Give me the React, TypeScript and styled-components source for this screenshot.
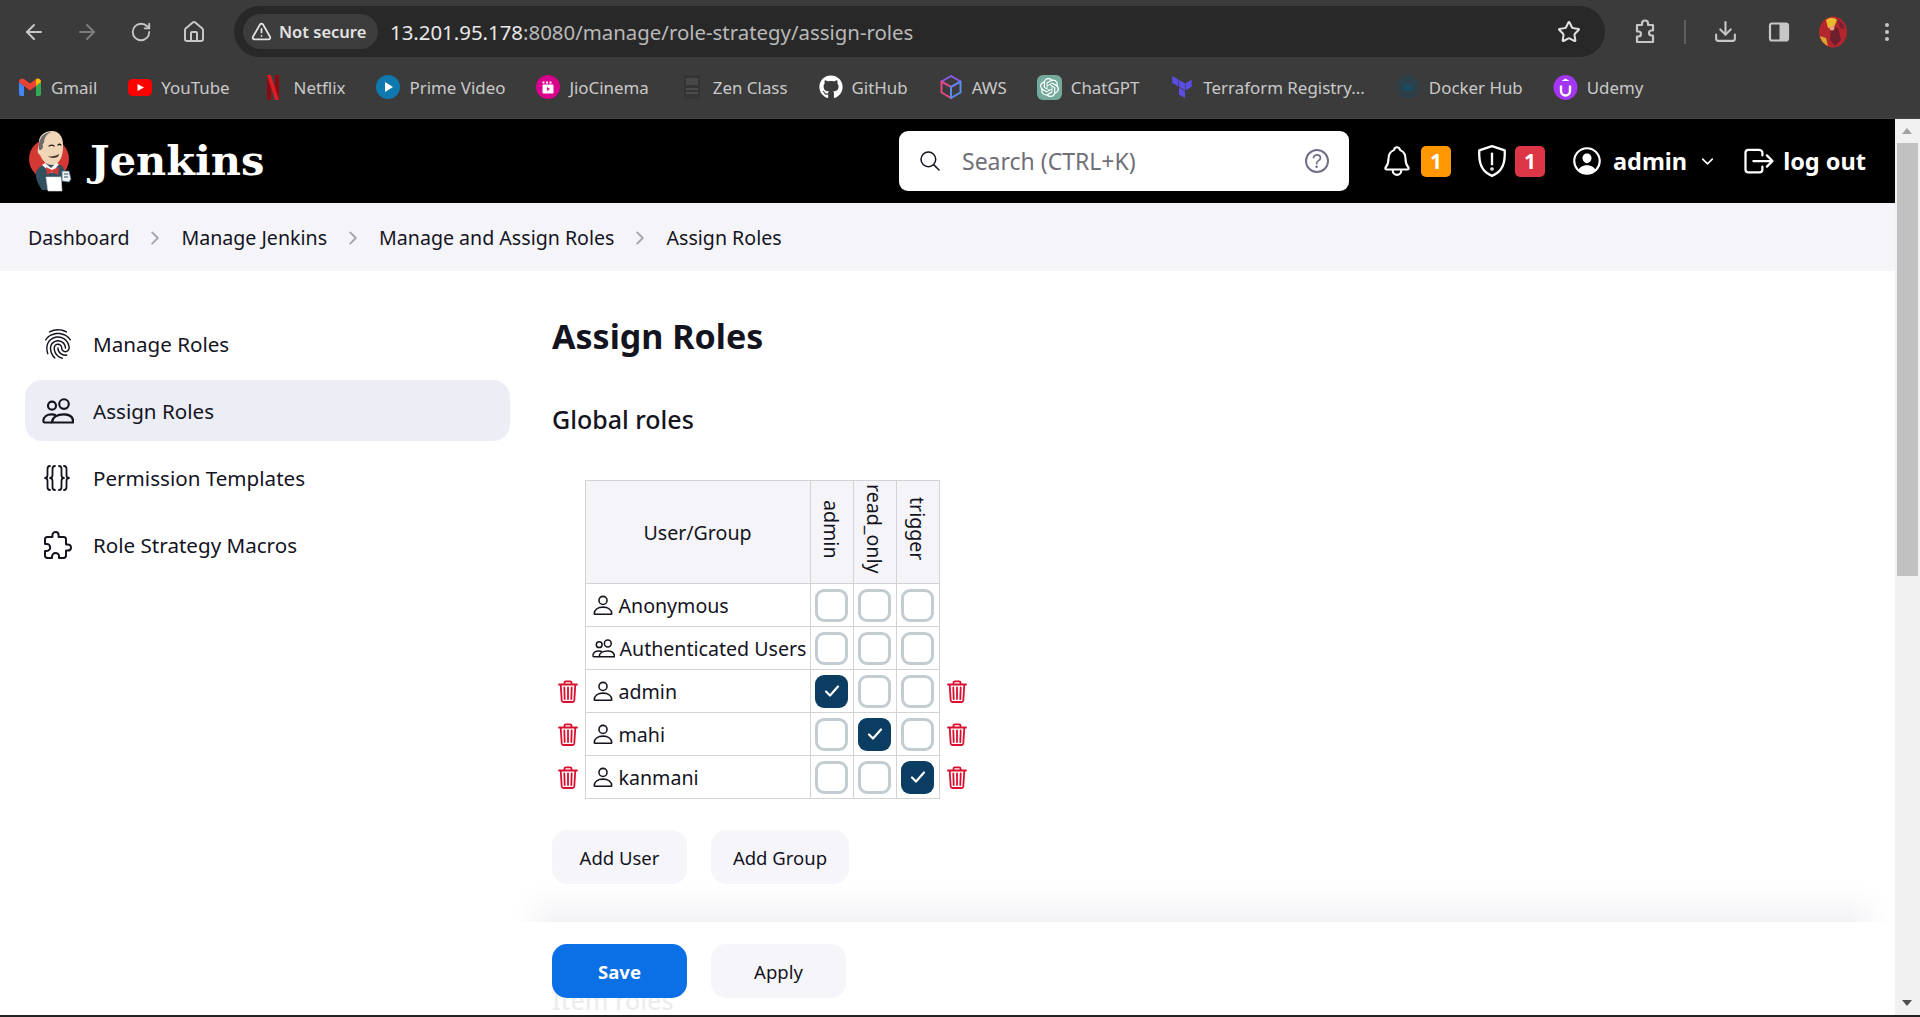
import { FC } from 'react';
import styled, { createGlobalStyle } from 'styled-components';
import {
  ArrowLeft,
  ArrowRight,
  RotateCw,
  Home,
  TriangleAlert,
  Star,
  Download,
  EllipsisVertical,
} from 'lucide-react';
import {
  IoFingerPrintOutline,
  IoExtensionPuzzleOutline,
  IoSearchOutline,
  IoHelpCircleOutline,
  IoNotificationsOutline,
  IoPersonCircleOutline,
  IoLogOutOutline,
  IoChevronDown,
  IoChevronForward,
} from 'react-icons/io5';
import { FaGithub } from 'react-icons/fa';
import { SiOpenai, SiTerraform } from 'react-icons/si';

const PersonIcon: FC<{ size?: number }> = ({ size = 22 }) => (
  <svg width={size} height={size} viewBox="0 0 24 24" fill="none" stroke="currentColor" strokeWidth="1.7" strokeLinejoin="round">
    <circle cx="12" cy="7" r="4.4" />
    <path d="M2.5 21.5c0-4.6 4.2-7.2 9.5-7.2s9.500 2.600 9.500 7.200c0 .4-.3.6-.6.6H3.100c-.3 0-.6-.2-.6-.6z" />
  </svg>
);

const PeopleIcon: FC<{ size?: number }> = ({ size = 22 }) => (
  <svg width={size} height={size} viewBox="0 0 24 24" fill="none" stroke="currentColor" strokeWidth="1.6" strokeLinejoin="round">
    <circle cx="7.500" cy="8" r="3" />
    <circle cx="16.500" cy="6.800" r="3.600" />
    <path d="M1 19.500c0-3.200 2.800-5 6.200-5 1.200 0 2.300.2 3.200.7" />
    <path d="M7.500 20.600c0-3.900 4-6.100 8.800-6.100s7.200 2.200 7.200 6.100H7.500z" />
    <path d="M1 19.500c0 .6.400 1.100 1 1.100h5.500" />
  </svg>
);

const TrashIcon: FC = () => (
  <svg width="20" height="23" viewBox="0 0 20 23" fill="none" stroke="#d9102f" strokeWidth="1.800" strokeLinecap="round" strokeLinejoin="round">
    <path d="M1 4.500h18" />
    <path d="M6.500 4.200V2.600c0-.8.600-1.300 1.300-1.300h4.400c.7 0 1.300.5 1.300 1.300v1.600" />
    <path d="M2.700 4.800l1 15.600c.1 1 .800 1.600 1.700 1.600h9.200c.9 0 1.600-.6 1.700-1.600l1-15.600" />
    <path d="M6.300 7.500l.4 11.500M10 7.500V19M13.700 7.500l-.4 11.500" />
  </svg>
);

const BracesIcon: FC = () => (
  <svg width="30" height="30" viewBox="0 0 30 30" fill="none" stroke="currentColor" strokeWidth="1.800" strokeLinecap="round" strokeLinejoin="round">
    <path d="M8 3C6 3 5.500 4 5.500 6v6c0 2-1 3-2.500 3 1.500 0 2.500 1 2.500 3v6c0 2 .5 3 2.500 3" />
    <path d="M13 3c-2 0-2.500 1-2.500 3v6c0 2-1 3-2.500 3 1.500 0 2.500 1 2.500 3v6c0 2 .5 3 2.500 3" />
    <path d="M17 3c2 0 2.500 1 2.500 3v6c0 2 1 3 2.500 3-1.500 0-2.500 1-2.500 3v6c0 2-.5 3-2.500 3" />
    <path d="M22 3c2 0 2.500 1 2.500 3v6c0 2 1 3 2.500 3-1.500 0-2.500 1-2.500 3v6c0 2-.5 3-2.500 3" />
  </svg>
);

const ShieldIcon: FC = () => (
  <svg width="32" height="34" viewBox="0 0 30 32" fill="none" stroke="#fff" strokeWidth="2.200" strokeLinecap="round" strokeLinejoin="round">
    <path d="M15 2l12 4c.5 12-2 20-12 24C5 26 2.500 18 3 6l12-4z" />
    <path d="M15 9v10" />
    <circle cx="15" cy="23.500" r=".6" fill="#fff" />
  </svg>
);

const ChromePuzzle: FC = () => (
  <svg width="26" height="26" viewBox="0 0 26 26" fill="none" stroke="#c7c7c7" strokeWidth="2.200" strokeLinejoin="round">
    <path d="M5 6h5V4.500a3 3 0 0 1 6 0V6h5v5.500h-1.500a2.500 2.500 0 0 0 0 5H21V23H5v-5.500h1.500a2.500 2.500 0 0 0 0-5H5V6z" />
  </svg>
);

const SidePanel: FC = () => (
  <svg width="24" height="24" viewBox="0 0 24 24" fill="none">
    <rect x="3" y="3.500" width="18" height="17" rx="2" stroke="#c7c7c7" strokeWidth="2.200" />
    <rect x="12.500" y="3.500" width="8.500" height="17" fill="#c7c7c7" />
  </svg>
);

const Avatar: FC = () => (
  <svg width="32" height="32" viewBox="0 0 32 32">
    <ellipse cx="16" cy="16" rx="14" ry="15.500" fill="#b3262e" />
    <path d="M9 4c4-3 8-3 11 0l-3 7-6 1z" fill="#e8b92c" />
    <path d="M3 20l6 2 2 8c-4-2-7-5-8-10z" fill="#d9a52a" />
    <path d="M14 10l7 2 3 12-6 6-5-6z" fill="#6d1f2c" />
    <path d="M20 3c4 2 7 6 8 10l-5-1z" fill="#7b2030" />
    <circle cx="15" cy="12" r="2.500" fill="#e9a07a" />
  </svg>
);

const GmailIcon: FC = () => (
  <svg width="22" height="18" viewBox="0 0 22 18">
    <path d="M0 4v12c0 1 .7 2 2 2h3V8z" fill="#4285f4" />
    <path d="M22 4v12c0 1-.7 2-2 2h-3V8z" fill="#34a853" />
    <path d="M0 4c0-3 3-4.500 5-3l6 4.500L17 1c2-1.500 5 0 5 3l-5 4-6 4.500L5 8z" fill="#ea4335" />
    <path d="M17 1c2-1.500 5 0 5 3l-5 4z" fill="#fbbc04" />
  </svg>
);

const YoutubeIcon: FC = () => (
  <svg width="24" height="17" viewBox="0 0 24 17">
    <rect width="24" height="17" rx="4.500" fill="#f00" />
    <path d="M9.500 5l6.500 3.500-6.500 3.500z" fill="#fff" />
  </svg>
);

const NetflixIcon: FC = () => (
  <svg width="12" height="25" viewBox="0 0 12 25">
    <path d="M0 0h4v25l-4 .0z" fill="#8f0a10" />
    <path d="M8 0h4v25H8z" fill="#8f0a10" />
    <path d="M0 0h4l8 25H8z" fill="#d81f26" />
  </svg>
);

const PrimeIcon: FC = () => (
  <svg width="24" height="24" viewBox="0 0 24 24">
    <circle cx="12" cy="12" r="12" fill="#0f79af" />
    <path d="M9 7l8 5-8 5z" fill="#fff" />
  </svg>
);

const JioIcon: FC = () => (
  <svg width="24" height="24" viewBox="0 0 24 24">
    <circle cx="12" cy="12" r="12" fill="#d9008d" />
    <rect x="6.500" y="9.500" width="11" height="9" rx="1" fill="#fff" />
    <path d="M6.500 6.500h2v2h-2zM10 6.500h2v2h-2zM13.500 6.500h2v2h-2z" fill="#fff" />
    <path d="M11 12l3 2-3 2z" fill="#d9008d" />
  </svg>
);

const ZenIcon: FC = () => (
  <svg width="16" height="24" viewBox="0 0 16 24">
    <rect width="16" height="24" fill="#353535" />
    <rect x="2" y="3" width="12" height="7" fill="#484848" />
    <rect x="2" y="13" width="12" height="2" fill="#4c4c4c" />
    <rect x="2" y="17" width="12" height="2" fill="#4c4c4c" />
  </svg>
);

const AwsIcon: FC = () => (
  <svg width="24" height="26" viewBox="0 0 24 26" fill="none" strokeWidth="2" strokeLinejoin="round">
    <path d="M12 2l9.500 5.500L12 13 2.500 7.500z" stroke="#8c5cf0" />
    <path d="M2.500 7.500v11L12 24V13z" stroke="#e8477f" />
    <path d="M21.500 7.500v11L12 24V13z" stroke="#5a8df0" />
  </svg>
);

const GptIcon: FC = () => (
  <GptTile>
    <SiOpenai size={19} color="#fff" />
  </GptTile>
);

const DockerIcon: FC = () => (
  <svg width="24" height="24" viewBox="0 0 24 24">
    <circle cx="12" cy="12" r="12" fill="#2f3f48" />
    <path d="M6 11h12c0 4-3 5.500-6 5.500S6 15 6 11z" fill="#1d4a63" />
    <path d="M8 8h7v2.500H8z" fill="#1d4a63" />
  </svg>
);

const UdemyIcon: FC = () => (
  <svg width="25" height="25" viewBox="0 0 25 25">
    <ellipse cx="12.500" cy="12.500" rx="12" ry="12.500" fill="#a435f0" />
    <path d="M8 10.500v5.500a4.500 4.500 0 0 0 9 0v-5.500" fill="none" stroke="#fff" strokeWidth="2.400" />
    <path d="M12.500 3.500l4 2.600h-8z" fill="#fff" />
  </svg>
);

const JenkinsLogo: FC = () => (
  <svg width="44" height="62" viewBox="0 0 44 62">
    <circle cx="21" cy="29" r="20" fill="#d33833" />
    <path d="M8 42c2-5 6-7 11-8l14 1c3 3 4 6 4 10l-3 6-8 9H14C10 54 7 48 8 42z" fill="#335061" />
    <path d="M11 12C11 5 17 1 24 1c7 0 11 6 11 13 0 4 0 8-1 11-1 5-5 10-10 10-6 0-10-5-12-10-2-1-3-4-2-6 0-3 1-4 1-7z" fill="#f0d6b7" />
    <path d="M11 19c-1-7 2-14 8-16 2-1 3-1 4-1-5 2-7 7-7 11-1 0-2 2-1 4 0 1-1 2-2 3-1 0-2 0-2-1z" fill="#6d6b6d" />
    <path d="M21 16c2-1 4-1 5 0M30 15c1-1 2-1 3 0" stroke="#231f20" strokeWidth="1.200" fill="none" strokeLinecap="round" />
    <path d="M20 26c3 1 8 0 11-2 0 2-1 3-3 3.500-3 1-6 .5-8-1.500z" fill="#49322a" />
    <path d="M17 33l6 5 5-5 3 1-6 8-2 1-9-8z" fill="#fff" />
    <path d="M18 37l6 3 7-3-1 8-6-3-5 3z" fill="#d33833" />
    <path d="M18 47h15l1 14H20z" fill="#fff" stroke="#d9d9d9" strokeWidth=".6" />
    <path d="M34 41l7 0 2 8-2 3-7-1z" fill="#eef0f2" stroke="#49728b" strokeWidth=".8" />
    <path d="M36 44h4M36 47h4" stroke="#335061" strokeWidth="1" />
  </svg>
);

const bookmarks: { name: string; icon: JSX.Element }[] = [
  { name: 'Gmail', icon: <GmailIcon /> },
  { name: 'YouTube', icon: <YoutubeIcon /> },
  { name: 'Netflix', icon: <NetflixIcon /> },
  { name: 'Prime Video', icon: <PrimeIcon /> },
  { name: 'JioCinema', icon: <JioIcon /> },
  { name: 'Zen Class', icon: <ZenIcon /> },
  { name: 'GitHub', icon: <FaGithub size={24} color="#fff" /> },
  { name: 'AWS', icon: <AwsIcon /> },
  { name: 'ChatGPT', icon: <GptIcon /> },
  { name: 'Terraform Registry...', icon: <SiTerraform size={22} color="#5c4ee5" /> },
  { name: 'Docker Hub', icon: <DockerIcon /> },
  { name: 'Udemy', icon: <UdemyIcon /> },
];

const crumbs = ['Dashboard', 'Manage Jenkins', 'Manage and Assign Roles', 'Assign Roles'];

const sideItems = [
  { label: 'Manage Roles', icon: <IoFingerPrintOutline size={32} /> },
  { label: 'Assign Roles', icon: <PeopleIcon size={32} />, active: true },
  { label: 'Permission Templates', icon: <BracesIcon /> },
  { label: 'Role Strategy Macros', icon: <IoExtensionPuzzleOutline size={32} /> },
];

const roles = ['admin', 'read_only', 'trigger'];

const rows = [
  { name: 'Anonymous', checked: -1, group: false, removable: false },
  { name: 'Authenticated Users', checked: -1, group: true, removable: false },
  { name: 'admin', checked: 0, group: false, removable: true },
  { name: 'mahi', checked: 1, group: false, removable: true },
  { name: 'kanmani', checked: 2, group: false, removable: true },
];

export default function App() {
  return (
    <>
      <GlobalStyle />
      <Screen>
        <Toolbar>
          <NavGroup>
            <NavButton><ArrowLeft size={24} /></NavButton>
            <NavButton dim><ArrowRight size={24} /></NavButton>
            <NavButton><RotateCw size={22} /></NavButton>
            <NavButton><Home size={24} /></NavButton>
          </NavGroup>
          <AddressBar>
            <SecureChip>
              <TriangleAlert size={21} />
              Not secure
            </SecureChip>
            <Url>13.201.95.178<UrlRest>:8080/manage/role-strategy/assign-roles</UrlRest></Url>
            <Star size={24} color="#e3e3e3" />
          </AddressBar>
          <ToolIcons>
            <ToolSlot><ChromePuzzle /></ToolSlot>
            <ToolSeparator />
            <ToolSlot><Download size={25} color="#c7c7c7" /></ToolSlot>
            <ToolSlot><SidePanel /></ToolSlot>
            <ToolSlot><Avatar /></ToolSlot>
            <ToolSlot><EllipsisVertical size={24} color="#c7c7c7" /></ToolSlot>
          </ToolIcons>
        </Toolbar>
        <BookmarkBar>
          {bookmarks.map(b => (
            <Bookmark key={b.name}>
              <BookmarkIcon>{b.icon}</BookmarkIcon>
              <span>{b.name}</span>
            </Bookmark>
          ))}
        </BookmarkBar>

        <Viewport>
          <Page>
            <Header>
              <LogoLink>
                <JenkinsLogo />
                <LogoText>Jenkins</LogoText>
              </LogoLink>
              <SearchBox>
                <IoSearchOutline size={24} color="#14141f" />
                <SearchText>Search (CTRL+K)</SearchText>
                <IoHelpCircleOutline size={32} color="#6f6f8a" />
              </SearchBox>
              <HeaderActions>
                <HeaderItem>
                  <IoNotificationsOutline size={34} />
                  <Badge color="#ff9800">1</Badge>
                </HeaderItem>
                <HeaderItem>
                  <ShieldIcon />
                  <Badge color="#dc3545">1</Badge>
                </HeaderItem>
                <UserLink>
                  <IoPersonCircleOutline size={34} />
                  <UserName>admin</UserName>
                  <IoChevronDown size={17} />
                </UserLink>
                <LogoutLink>
                  <IoLogOutOutline size={36} />
                  log out
                </LogoutLink>
              </HeaderActions>
            </Header>

            <Breadcrumbs>
              {crumbs.map((c, i) => (
                <Crumb key={c}>
                  {c}
                  {i < crumbs.length - 1 && (
                    <CrumbArrow><IoChevronForward size={20} /></CrumbArrow>
                  )}
                </Crumb>
              ))}
            </Breadcrumbs>

            <Columns>
              <Sidebar>
                {sideItems.map(item => (
                  <SideItem key={item.label} active={item.active}>
                    <SideIcon>{item.icon}</SideIcon>
                    {item.label}
                  </SideItem>
                ))}
              </Sidebar>
              <Content>
                <Title>Assign Roles</Title>
                <SectionTitle>Global roles</SectionTitle>
                <RolesTable>
                  <colgroup>
                    <col width={33} />
                    <col width={225} />
                    <col width={43} />
                    <col width={43} />
                    <col width={43} />
                    <col width={36} />
                  </colgroup>
                  <thead>
                    <tr>
                      <EmptyCell />
                      <UserHead>User/Group</UserHead>
                      {roles.map(r => (
                        <RoleHead key={r}><RoleLabel>{r}</RoleLabel></RoleHead>
                      ))}
                      <EmptyCell />
                    </tr>
                  </thead>
                  <tbody>
                    {rows.map(row => (
                      <tr key={row.name}>
                        <EmptyCell>{row.removable && <TrashIcon />}</EmptyCell>
                        <UserCell>
                          <UserInner>
                            {row.group ? <PeopleIcon size={23} /> : <PersonIcon size={22} />}
                            {row.name}
                          </UserInner>
                        </UserCell>
                        {roles.map((r, i) => (
                          <BoxCell key={r}>
                            <CheckBox checked={row.checked === i}>
                              {row.checked === i && (
                                <svg width="20" height="20" viewBox="0 0 20 20" fill="none" stroke="#fff" strokeWidth="2.200" strokeLinecap="round" strokeLinejoin="round">
                                  <path d="M4 10.500l4 4 8-9" />
                                </svg>
                              )}
                            </CheckBox>
                          </BoxCell>
                        ))}
                        <EmptyCell>{row.removable && <TrashIcon />}</EmptyCell>
                      </tr>
                    ))}
                  </tbody>
                </RolesTable>
                <ButtonRow>
                  <GhostButton wide={135}>Add User</GhostButton>
                  <GhostButton wide={138}>Add Group</GhostButton>
                </ButtonRow>
                <NextSection>Item roles</NextSection>
              </Content>
            </Columns>

            <SaveBar>
              <SaveButton>Save</SaveButton>
              <GhostButton wide={135}>Apply</GhostButton>
            </SaveBar>
          </Page>
          <Scrollbar>
            <ScrollArrow up />
            <ScrollThumb />
            <ScrollArrow />
          </Scrollbar>
        </Viewport>
      </Screen>
    </>
  );
}

const uiFont = `"Noto Sans", "Open Sans", sans-serif`;

const GlobalStyle = createGlobalStyle`
  html, body {
    margin: 0;
    padding: 0;
    background: #222;
    font-family: ${uiFont};
    overflow: hidden;
  }
  * { box-sizing: border-box; }
`;

const Screen = styled.div`
  width: 1920px;
  height: 1017px;
  display: flex;
  flex-direction: column;
  background: #222;
  overflow: hidden;
`;

const Toolbar = styled.div`
  height: 64px;
  flex-shrink: 0;
  background: #3b3b3b;
  display: flex;
  align-items: flex-start;
  padding: 6px 0 0 7px;
`;

const NavGroup = styled.div`
  display: flex;
  width: 227px;
  height: 51px;
  align-items: center;
`;

const NavButton = styled.div<{ dim?: boolean }>`
  width: 53.5px;
  display: flex;
  justify-content: center;
  color: ${props => (props.dim ? '#7c7c7c' : '#c7c7c7')};
`;

const AddressBar = styled.div`
  width: 1371px;
  height: 51px;
  border-radius: 26px;
  background: #282828;
  display: flex;
  align-items: center;
  padding: 0 24px 0 9px;
`;

const SecureChip = styled.div`
  height: 35px;
  width: 135px;
  border-radius: 18px;
  background: #3c3c3c;
  color: #e3e3e3;
  display: flex;
  align-items: center;
  gap: 7px;
  padding-left: 8px;
  font-size: 16.5px;
  font-weight: 600;
  white-space: nowrap;
  svg { flex-shrink: 0; }
`;

const Url = styled.div`
  flex: 1;
  margin-left: 12px;
  font-size: 20.4px;
  color: #e8e8e8;
  white-space: nowrap;
`;

const UrlRest = styled.span`
  color: #b9b9b9;
`;

const ToolIcons = styled.div`
  display: flex;
  align-items: center;
  height: 51px;
  margin-left: 13px;
`;

const ToolSlot = styled.div`
  width: 54px;
  display: flex;
  justify-content: center;
`;

const ToolSeparator = styled.div`
  width: 2px;
  height: 24px;
  margin: 0 12px;
  background: #5e5e5e;
`;

const BookmarkBar = styled.div`
  height: 54px;
  flex-shrink: 0;
  background: #3b3b3b;
  display: flex;
  align-items: flex-start;
  padding: 10px 0 0 17px;
  gap: 30px;
`;

const Bookmark = styled.div`
  display: flex;
  align-items: center;
  gap: 8px;
  height: 26px;
  color: #c9c9c9;
  font-size: 16.9px;
  white-space: nowrap;
`;

const BookmarkIcon = styled.span`
  width: 26px;
  display: flex;
  justify-content: center;
`;

const GptTile = styled.div`
  width: 25px;
  height: 25px;
  border-radius: 6px;
  background: #74aa9c;
  display: flex;
  align-items: center;
  justify-content: center;
`;

const Viewport = styled.div`
  height: 899px;
  flex-shrink: 0;
  display: flex;
  border-bottom: 2px solid #222;
  border-top: 1px solid #444;
`;

const Page = styled.div`
  position: relative;
  flex: 1;
  min-width: 0;
  background: #fff;
  overflow: hidden;
`;

const Header = styled.header`
  height: 84px;
  background: #000;
  display: flex;
  align-items: center;
  padding-left: 28px;
`;

const LogoLink = styled.div`
  display: flex;
  align-items: center;
  gap: 18px;
  width: 871px;
`;

const LogoText = styled.span`
  font-family: "DejaVu Serif", "Liberation Serif", serif;
  font-weight: 700;
  font-size: 41.5px;
  color: #fff;
  line-height: 1;
`;

const SearchBox = styled.div`
  width: 450px;
  height: 60px;
  flex-shrink: 0;
  border-radius: 9px;
  background: #fff;
  display: flex;
  align-items: center;
  padding: 0 16px 0 19px;
`;

const SearchText = styled.span`
  flex: 1;
  margin-left: 20px;
  font-size: 23px;
  color: #6f6f78;
`;

const HeaderActions = styled.div`
  display: flex;
  align-items: center;
  margin-left: 31px;
  color: #fff;
  gap: 25px;
`;

const HeaderItem = styled.div`
  display: flex;
  align-items: center;
  gap: 7px;
`;

const Badge = styled.span<{ color: string }>`
  width: 30px;
  height: 31px;
  border-radius: 5px;
  background: ${props => props.color};
  color: #fff;
  font-size: 21px;
  font-weight: 700;
  display: flex;
  align-items: center;
  justify-content: center;
`;

const UserLink = styled.div`
  display: flex;
  align-items: center;
  gap: 9px;
`;

const UserName = styled.span`
  font-size: 23.5px;
  font-weight: 700;
  margin-right: 3px;
`;

const LogoutLink = styled.div`
  display: flex;
  align-items: center;
  gap: 6px;
  font-size: 23.5px;
  font-weight: 700;
  white-space: nowrap;
`;

const Breadcrumbs = styled.nav`
  height: 68px;
  background: #f4f4f9;
  display: flex;
  align-items: center;
  padding: 1px 0 0 28px;
`;

const Crumb = styled.div`
  display: flex;
  align-items: center;
  font-size: 19.6px;
  font-weight: 450;
  color: #14141f;
  white-space: nowrap;
`;

const CrumbArrow = styled.span`
  display: flex;
  color: #a4a4b0;
  margin: 0 16px;
`;

const Columns = styled.div`
  display: flex;
  align-items: flex-start;
`;

const Sidebar = styled.aside`
  width: 552px;
  flex-shrink: 0;
  padding: 42px 42px 0 25px;
  display: flex;
  flex-direction: column;
  gap: 6px;
`;

const SideItem = styled.div<{ active?: boolean }>`
  height: 61px;
  border-radius: 17px;
  background: ${props => (props.active ? '#ecedf5' : 'transparent')};
  display: flex;
  align-items: center;
  font-size: 20.6px;
  font-weight: 450;
  color: #14141f;
`;

const SideIcon = styled.span`
  width: 68px;
  padding-left: 17px;
  display: flex;
  align-items: center;
  color: #14141f;
`;

const Content = styled.main`
  flex: 1;
  min-width: 0;
  padding-top: 41px;
  color: #14141f;
`;

const Title = styled.h1`
  margin: 0;
  font-size: 34px;
  line-height: 48px;
  font-weight: 700;
`;

const SectionTitle = styled.h2`
  margin: 42px 0 0;
  font-size: 25px;
  line-height: 34px;
  font-weight: 500;
`;

const RolesTable = styled.table`
  margin: 44px 0 0;
  table-layout: fixed;
  width: 423px;
  border-collapse: collapse;
  font-size: 19.6px;
  color: #14141f;
`;

const EmptyCell = styled.td`
  padding: 0;
  border: none;
  text-align: center;
  vertical-align: middle;
  line-height: 0;
`;

const UserHead = styled.th`
  height: 103px;
  padding: 0;
  background: #f4f4f9;
  border: 1px solid #d3d3d6;
  font-weight: 400;
`;

const RoleHead = styled.th`
  padding: 0;
  background: #f4f4f9;
  border: 1px solid #d3d3d6;
  font-weight: 400;
  text-align: center;
`;

const RoleLabel = styled.span`
  writing-mode: vertical-rl;
  display: inline-block;
  line-height: 1;
`;

const UserCell = styled.td`
  height: 43px;
  padding: 0 0 0 6px;
  border: 1px solid #d3d3d6;
  white-space: nowrap;
`;

const UserInner = styled.div`
  display: flex;
  align-items: center;
  gap: 5px;
`;

const BoxCell = styled.td`
  padding: 0;
  border: 1px solid #d3d3d6;
  text-align: center;
  vertical-align: middle;
  line-height: 0;
`;

const CheckBox = styled.span<{ checked: boolean }>`
  display: inline-flex;
  align-items: center;
  justify-content: center;
  width: 33px;
  height: 33px;
  border-radius: 9px;
  border: ${props => (props.checked ? 'none' : '3px solid #c3ccd1')};
  background: ${props => (props.checked ? '#0b3c61' : '#fff')};
`;

const ButtonRow = styled.div`
  display: flex;
  gap: 24px;
  margin-top: 31px;
`;

const GhostButton = styled.button<{ wide: number }>`
  width: ${props => props.wide}px;
  height: 54px;
  border: none;
  border-radius: 15px;
  background: #f6f6fa;
  color: #14141f;
  font-family: inherit;
  font-size: 18.5px;
  font-weight: 450;
`;

const NextSection = styled.h2`
  margin: 99px 0 0;
  font-size: 25px;
  line-height: 34px;
  font-weight: 500;
`;

const SaveBar = styled.div`
  position: absolute;
  left: 515px;
  right: 5px;
  bottom: 0;
  height: 93px;
  padding: 22px 0 0 37px;
  display: flex;
  gap: 24px;
  background: rgba(255, 255, 255, 0.92);

  &::before {
    content: '';
    position: absolute;
    left: 0;
    right: 0;
    top: -38px;
    height: 38px;
    background: linear-gradient(to top, #f3f3f6, #fff);
    mask-image: linear-gradient(to right, transparent, #000 40px, #000 calc(100% - 40px), transparent);
  }
`;

const SaveButton = styled.button`
  width: 135px;
  height: 54px;
  border: none;
  border-radius: 15px;
  background: #0b6fe5;
  color: #fff;
  font-family: inherit;
  font-size: 18.5px;
  font-weight: 700;
`;

const Scrollbar = styled.div`
  width: 25px;
  flex-shrink: 0;
  background: #f1f1f1;
  display: flex;
  flex-direction: column;
  align-items: center;
`;

const ScrollArrow = styled.div<{ up?: boolean }>`
  height: 24px;
  flex-shrink: 0;
  width: 100%;
  position: relative;
  margin-top: ${props => (props.up ? '0' : 'auto')};
  &::after {
    content: '';
    position: absolute;
    left: 7px;
    top: 9px;
    border-left: 5.5px solid transparent;
    border-right: 5.5px solid transparent;
    ${props =>
      props.up ? 'border-bottom: 6px solid #a3a3a3;' : 'border-top: 6px solid #505050;'}
  }
`;

const ScrollThumb = styled.div`
  width: 21px;
  height: 433px;
  background: #c1c1c1;
`;
